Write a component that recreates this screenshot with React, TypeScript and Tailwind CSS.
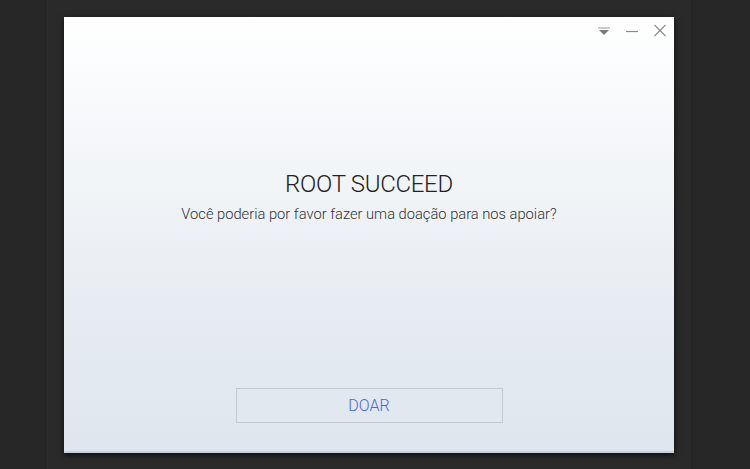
export default function App() {
  return (
    <div className="w-[750px] h-[469px] bg-[#272727] flex justify-start pl-[45px] overflow-hidden">
      <div className="w-[647px] h-full bg-[#2a2a2a] border-x border-[#222] flex flex-col items-start pl-[18px] pt-[17px]">
        <div
          className="w-[610px] h-[436px] flex flex-col items-center shadow-[0_2px_6px_rgba(0,0,0,0.7)] border-b-2 border-[#c9d3dd]"
          style={{ background: "linear-gradient(to bottom, #ffffff 0%, #f2f5f8 35%, #e6ebf1 70%, #dfe6ee 100%)" }}
        >
          <div className="w-full flex justify-end items-center gap-[14px] pr-[7px] pt-[7px] h-[20px]">
            <svg width="14" height="12" viewBox="0 0 14 12">
              <line x1="1" y1="3" x2="13" y2="3" stroke="#9a9a9a" strokeWidth="1" />
              <polygon points="2,5 12,5 7,10" fill="#7a7a7a" />
            </svg>
            <svg width="14" height="12" viewBox="0 0 14 12">
              <line x1="1" y1="6.5" x2="13" y2="6.5" stroke="#8a8a8a" strokeWidth="1.2" />
            </svg>
            <svg width="14" height="13" viewBox="0 0 14 13">
              <line x1="1.5" y1="1" x2="12.5" y2="12" stroke="#8a8a8a" strokeWidth="1.1" />
              <line x1="12.5" y1="1" x2="1.5" y2="12" stroke="#8a8a8a" strokeWidth="1.1" />
            </svg>
          </div>
          <div
            className="mt-[133px] text-[24px] leading-[28px] text-[#222] font-light tracking-[-0.3px]"
            style={{ fontFamily: "Roboto, 'Liberation Sans', sans-serif" }}
          >
            ROOT SUCCEED
          </div>
          <div
            className="mt-[6px] text-[14.7px] leading-[20px] text-[#333] font-light"
            style={{ fontFamily: "Roboto, 'Liberation Sans', sans-serif" }}
          >
            Você poderia por favor fazer uma doação para nos apoiar?
          </div>
          <div className="flex-1" />
          <button
            className="mb-[28px] w-[267px] h-[35px] border border-[#c3cad3] bg-[#e2e8ef] text-[#4c66d6] text-[16px] font-light flex items-center justify-center"
            style={{ fontFamily: "Roboto, 'Liberation Sans', sans-serif" }}
          >
            DOAR
          </button>
        </div>
      </div>
    </div>
  );
}
